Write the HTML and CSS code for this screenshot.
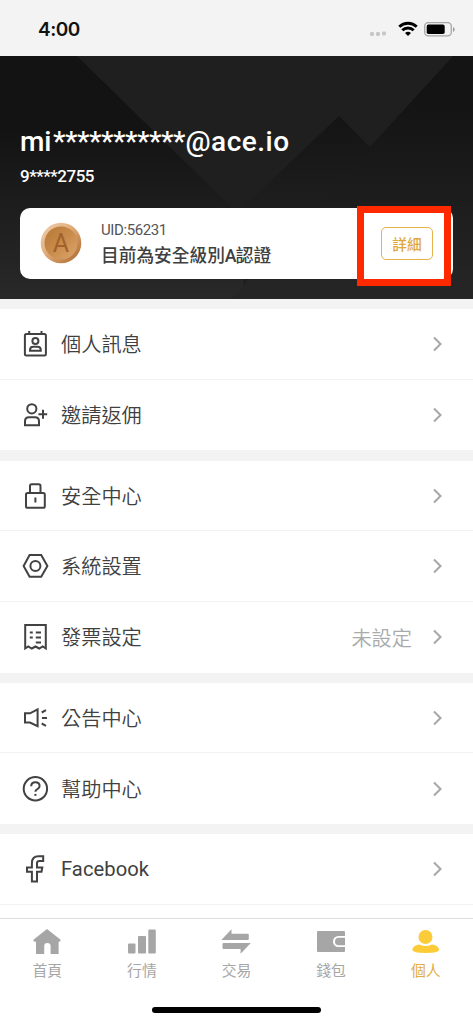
FILE: index.html
```html
<!DOCTYPE html>
<html lang="zh-Hant">
<head>
<meta charset="utf-8">
<title>個人</title>
<link rel="stylesheet" href="styles.css">
</head>
<body>
<div class="app">
  <header class="status">
    <span class="time">4:00</span>
    <svg class="signal" width="90" height="20" viewBox="0 0 90 20">
      <g fill="#c6c6c6"><rect x="5" y="13" width="4" height="4" rx="1.4"/><rect x="11" y="13" width="4" height="4" rx="1.4"/><rect x="17" y="12.5" width="4" height="4" rx="1.4"/></g>
      <g fill="none" stroke="#000" stroke-width="2.9"><path d="M34.3 7.8a12.6 12.6 0 0 1 17.4 0"/><path d="M37.3 11.3a8.2 8.2 0 0 1 11.4 0"/></g>
      <path d="M40 14a4.6 4.6 0 0 1 6 0L43 17z"/>
      <rect x="59.7" y="3.7" width="26.6" height="13.2" rx="3.6" fill="none" stroke="#a6a6a6" stroke-width="1.3"/>
      <rect x="61.7" y="5.6" width="18" height="9.4" rx="1.8"/>
      <path d="M88 8v5q1.7-.8 1.7-2.5T88 8z" fill="#999"/>
    </svg>
  </header>

  <section class="hero">
    <svg class="hero-art" width="473" height="243" viewBox="0 0 473 243">
      <defs>
        <linearGradient id="base" x1="0" y1="0" x2="0" y2="1"><stop offset=".3" stop-color="#131313"/><stop offset="1" stop-color="#292929"/></linearGradient>
        <linearGradient id="peak" x1="0" y1="0" x2="0" y2="1"><stop offset="0" stop-color="#141414"/><stop offset=".55" stop-color="#1f1f1f"/><stop offset="1" stop-color="#202020"/></linearGradient>
        <linearGradient id="right" x1="0" y1="0" x2="0" y2="1"><stop offset=".2" stop-color="#141414"/><stop offset="1" stop-color="#262626"/></linearGradient>
      </defs>
      <rect width="473" height="243" fill="url(#base)"/>
      <path d="M77 0H473V243H324L231 151z" fill="#1f1f1f"/>
      <path d="M339 60L243 151V243H420V141z" fill="url(#peak)"/>
      <path d="M453 0H473V243H231z" fill="url(#right)"/>
    </svg>
    <div class="account">
      <h1 class="email"><span class="mi">mi</span><span class="mask">***********</span><span class="domain">@ace.io</span></h1>
      <p class="phone">9****2755</p>
      <div class="card">
        <svg class="medal" width="42" height="42" viewBox="0 0 42 42">
          <defs>
            <linearGradient id="rim" x1="0" y1="0" x2="1" y2="1"><stop offset="0" stop-color="#f0d3b5"/><stop offset=".45" stop-color="#e0ab79"/><stop offset="1" stop-color="#a86529"/></linearGradient>
            <linearGradient id="face" x1="0" y1="0" x2="1" y2="1"><stop offset="0" stop-color="#b67834"/><stop offset=".5" stop-color="#c98b4b"/><stop offset="1" stop-color="#dda66d"/></linearGradient>
          </defs>
          <circle cx="21" cy="21" r="20.3" fill="url(#rim)"/><circle cx="21" cy="21" r="16.5" fill="url(#face)"/>
          <text class="medal-letter" x="21" y="29.5" text-anchor="middle">A</text>
        </svg>
        <div class="level"><div class="uid">UID:56231</div><div class="grade">目前為安全級別<span class="grade-a">A</span>認證</div></div>
        <button class="detail">詳細</button>
        <div class="highlight"></div>
      </div>
    </div>
  </section>

  <main class="menu">
    <section class="group">
      <div class="row"><svg class="icon" viewBox="0 0 28 28"><rect x="3.9" y="4" width="21" height="21.5" rx="1.5"/><path d="M8.2 1V4M20.5 1V4"/><circle cx="14.4" cy="11" r="3"/><path d="M9 20.8v-.8q0-3.3 3.3-3.3h4.2q3.3 0 3.3 3.3v.8z"/></svg><span class="label">個人訊息</span><svg class="chevron" viewBox="0 0 12 18"><path d="M2 2.5l6.5 6.5-6.5 6.5"/></svg></div>
      <div class="row"><svg class="icon" viewBox="0 0 28 28"><circle cx="10.8" cy="7.8" r="4.6"/><path d="M4 24.3v-4q0-4 4-4h6q4 0 4 4v4zM22 8.8v9M17.4 13.3H26.2"/></svg><span class="label">邀請返佣</span><svg class="chevron" viewBox="0 0 12 18"><path d="M2 2.5l6.5 6.5-6.5 6.5"/></svg></div>
    </section>
    <section class="group">
      <div class="row"><svg class="icon" viewBox="0 0 28 28"><rect x="5" y="11" width="18.8" height="14.8" rx="1.6"/><path d="M9 11V4q0-1.7 1.7-1.7h7.1q1.7 0 1.7 1.7v7M14.4 15.5v5"/></svg><span class="label">安全中心</span><svg class="chevron" viewBox="0 0 12 18"><path d="M2 2.5l6.5 6.5-6.5 6.5"/></svg></div>
      <div class="row"><svg class="icon" viewBox="0 0 28 28"><path d="M8.6 3h11.6L26.4 14l-6.2 10.8H8.6L2.6 14z"/><circle cx="14.4" cy="14" r="5"/></svg><span class="label">系統設置</span><svg class="chevron" viewBox="0 0 12 18"><path d="M2 2.5l6.5 6.5-6.5 6.5"/></svg></div>
      <div class="row"><svg class="icon" viewBox="0 0 28 28"><path d="M4.2 25.5V2h20.6v23.5l-3.1-2-3.5 2-3.7-2-3.7 2-3.5-2z"/><path d="M8.8 9.5h3M14.8 9.5H20M8.8 14.5h3M14.8 14.5H20M14.8 19.5H20"/></svg><span class="label">發票設定</span><span class="value">未設定</span><svg class="chevron" viewBox="0 0 12 18"><path d="M2 2.5l6.5 6.5-6.5 6.5"/></svg></div>
    </section>
    <section class="group">
      <div class="row"><svg class="icon" viewBox="0 0 28 28"><path d="M4 9.3h5l7.6-4v16.9l-7.6-3.7H4zM20.7 8.5l4.3-2.3M21 14h5M20.7 19.5l4.3 2.3"/></svg><span class="label">公告中心</span><svg class="chevron" viewBox="0 0 12 18"><path d="M2 2.5l6.5 6.5-6.5 6.5"/></svg></div>
      <div class="row"><svg class="icon" viewBox="0 0 28 28"><circle cx="14.4" cy="13.7" r="11.7"/><path d="M10.2 11.2q0-4 4.2-4t4.2 3.7q0 2.1-2.2 3.3-2 1-2 2.6"/><path d="M14.4 18.9v2"/></svg><span class="label">幫助中心</span><svg class="chevron" viewBox="0 0 12 18"><path d="M2 2.5l6.5 6.5-6.5 6.5"/></svg></div>
    </section>
    <section class="group">
      <div class="row"><svg class="icon" viewBox="0 0 28 28"><path d="M10.9 26.5v-9.7H6v-4.4h4.9V8.2q0-6.9 6.6-6.9h4.7v4.6h-3.7q-2.5 0-2.5 2v4.5h5.3l-.8 4.4H16v9.7z"/></svg><span class="label latin">Facebook</span><svg class="chevron" viewBox="0 0 12 18"><path d="M2 2.5l6.5 6.5-6.5 6.5"/></svg></div>
    </section>
  </main>

  <footer class="bottom">
    <nav class="tabs">
      <div class="tab"><svg class="tab-icon" viewBox="0 0 32 28"><path d="M16 1L29.6 11.8q.4 2-1.6 2h-.4V26h-8v-7.7a3.2 3.2 0 0 0-6.4 0V26H5V13.8h-1q-2 0-1.6-2z"/></svg><span class="tab-label">首頁</span></div>
      <div class="tab"><svg class="tab-icon" viewBox="0 0 32 28"><rect x="2" y="15.5" width="7.5" height="10" rx="1"/><rect x="12" y="8" width="8" height="17.5" rx="1"/><rect x="22.3" y="1.5" width="7.5" height="24" rx="1"/></svg><span class="tab-label">行情</span></div>
      <div class="tab"><svg class="tab-icon" viewBox="0 0 32 28"><path d="M1.3 12L11.5 1.3v4.5h16.3q1 0 1 1V11q0 1-1 1zM3.5 15h27.3L20.6 25.7V21H3.5q-1 0-1-1v-4q0-1 1-1z"/></svg><span class="tab-label">交易</span></div>
      <div class="tab"><svg class="tab-icon" viewBox="0 0 32 28"><path d="M3 3h26q1 0 1 1v4h-6.5a5.5 5.5 0 0 0 0 11H30v4q0 1-1 1H3q-1 0-1-1V4q0-1 1-1zM30 9.7v7.6h-6.2a3.8 3.8 0 0 1 0-7.6z"/></svg><span class="tab-label">錢包</span></div>
      <div class="tab active"><svg class="tab-icon" viewBox="0 0 32 28"><circle cx="15.5" cy="9" r="7"/><path d="M2.2 21.5q1.5-4.5 7.5-5 5.500 3 12 0 6 .5 7.500 5 0 3.500-13.500 3.500T2.200 21.500z"/></svg><span class="tab-label">個人</span></div>
    </nav>
    <div class="home-bar"></div>
  </footer>
</div>
</body>
</html>
```

FILE: styles.css
```css
* { box-sizing: border-box; }
body { margin: 0; background: #fff; font-family: Roboto, "Noto Sans CJK TC", sans-serif; color: #404040; }
.app { width: 473px; height: 1024px; display: flex; flex-direction: column; overflow: hidden; }
.status { flex: 0 0 55.5px; background: #f3f3f3; display: flex; justify-content: space-between; padding: 18px 18px 0 38px; }
.time { font: 600 19px/24px Inter, sans-serif; color: #111; letter-spacing: -.5px; }
.signal { margin-top: 1px; }
.hero { flex: 0 0 243.2px; display: grid; background: #1d1d1d; overflow: hidden; }
.hero-art, .account { grid-area: 1 / 1; }
.account { z-index: 1; padding: 67px 20px 0; color: #fff; min-width: 0; }
.email { margin: 0; height: 38px; display: flex; white-space: nowrap; font-size: 28px; line-height: 38px; font-weight: 500; }
.mi { width: 33px; letter-spacing: -.2px; }
.mask { width: 132.5px; letter-spacing: -.42px; }
.domain { letter-spacing: .5px; }
.phone { margin: 3px 0 0; font-size: 17px; line-height: 24px; font-weight: 500; letter-spacing: -.5px; }
.card { position: relative; margin-top: 20px; width: 433px; height: 71px; border-radius: 10px; background: #fff; display: flex; align-items: center; padding: 0 20px; color: #404040; }
.medal { flex: none; }
.medal-letter { font: 400 25px Roboto, sans-serif; fill: #a1622a; }
.level { margin-left: 19px; padding-top: 5px; flex: 1; white-space: nowrap; }
.uid { font-size: 15px; line-height: 22px; letter-spacing: -.4px; color: #555; }
.grade { font-size: 17.7px; line-height: 31px; font-weight: 500; }
.grade-a { display: inline-block; width: 11px; }
.detail { width: 52px; height: 33px; padding: 0; border: 1.5px solid #e5b24c; border-radius: 5px; background: #fff; color: #e0a83c; font: 500 14.7px/29px "Noto Sans CJK TC", sans-serif; }
.highlight { position: absolute; left: 337px; top: -2px; width: 94px; height: 80px; border: 7px solid #ff2900; }
.menu { flex: 1; min-height: 0; overflow: hidden; padding-top: 10.6px; background: #f3f3f3; display: flex; flex-direction: column; gap: 10.3px; }
.group { flex: none; background: #fff; }
.group:last-child { height: 100px; }
.row { height: 70.6px; display: flex; align-items: center; padding: 0 29px 0 21px; }
.row:not(:last-child), .group:last-child .row { border-bottom: 1.3px solid #f2f2f2; }
.icon { width: 28px; height: 28px; flex: none; fill: none; stroke: #424242; stroke-width: 2; }
.label { margin-left: 12px; padding-top: 2px; flex: 1; font-size: 20.2px; line-height: 30px; font-weight: 350; }
.latin { padding-top: 0; letter-spacing: .05px; font-weight: 400; }
.value { font-size: 20.2px; font-weight: 350; color: #aaa; margin-right: 20px; }
.chevron { width: 12px; height: 18px; fill: none; stroke: #a8a8a8; stroke-width: 2.1; }
.bottom { flex: 0 0 106px; border-top: 1.3px solid #dedede; background: #fff; display: flex; flex-direction: column; align-items: center; }
.tabs { width: 473px; height: 88px; display: grid; grid-template-columns: repeat(5, 1fr); padding-top: 9px; }
.tab { display: flex; flex-direction: column; align-items: center; color: #a6a6a6; }
.tab-icon { width: 32px; height: 28px; fill: currentColor; }
.tab-label { font-size: 14.8px; line-height: 24px; margin-top: 3px; font-weight: 400; }
.active { color: #e2ae42; }
.active .tab-icon { fill: #fbcb38; }
.home-bar { width: 169px; height: 6px; border-radius: 3px; background: #000; }
```
